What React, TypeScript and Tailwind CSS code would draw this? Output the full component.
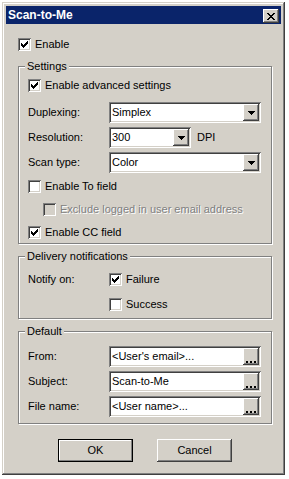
import React from "react";

const sunken =
  "shadow-[inset_1px_1px_0_#808080,inset_-1px_-1px_0_#ffffff,inset_2px_2px_0_#404040,inset_-2px_-2px_0_#d4d0c8]";
const raised =
  "shadow-[inset_-1px_-1px_0_#404040,inset_1px_1px_0_#ffffff,inset_-2px_-2px_0_#808080]";

function CheckMark() {
  return (
    <svg width="7" height="7" viewBox="0 0 7 7" shapeRendering="crispEdges" className="block">
      <path
        fill="#000"
        d="M6 0h1v1h-1zM5 1h2v1h-2zM0 2h1v1h-1zM4 2h3v1h-3zM0 3h2v1h-2zM3 3h3v1h-3zM0 4h5v1h-5zM1 5h3v1h-3zM2 6h1v1h-1z"
      />
    </svg>
  );
}

function CheckRow({
  label,
  checked,
  disabled,
  className = "",
}: {
  label: string;
  checked?: boolean;
  disabled?: boolean;
  className?: string;
}) {
  return (
    <div className={`flex items-center h-[13px] gap-[4px] ${className}`}>
      <span
        className={`w-[13px] h-[13px] shrink-0 flex items-center justify-center ${
          disabled ? "bg-[#d4d0c8]" : "bg-white"
        } ${sunken}`}
      >
        {checked && <CheckMark />}
      </span>
      <span
        className={
          disabled ? "text-[#808080] [text-shadow:1px_1px_0_#ffffff] whitespace-nowrap" : "whitespace-nowrap"
        }
      >
        {label}
      </span>
    </div>
  );
}

function DropButton() {
  return (
    <span className={`w-[16px] shrink-0 bg-[#d4d0c8] flex items-center justify-center ${raised}`}>
      <svg width="7" height="4" viewBox="0 0 7 4" shapeRendering="crispEdges" className="block">
        <path fill="#000" d="M0 0h7v1h-7zM1 1h5v1h-5zM2 2h3v1h-3zM3 3h1v1h-1z" />
      </svg>
    </span>
  );
}

function DotsButton() {
  return (
    <span className={`w-[16px] shrink-0 bg-[#d4d0c8] flex items-end justify-center pb-[2px] ${raised}`}>
      <svg width="10" height="2" viewBox="0 0 10 2" shapeRendering="crispEdges" className="block">
        <path fill="#000" d="M0 0h2v2h-2zM4 0h2v2h-2zM8 0h2v2h-2z" />
      </svg>
    </span>
  );
}

function Combo({ value, className }: { value: string; className: string }) {
  return (
    <div className={`h-[21px] bg-white flex p-[2px] ${sunken} ${className}`}>
      <span className="flex-1 flex items-center pl-[1px] whitespace-nowrap">{value}</span>
      <DropButton />
    </div>
  );
}

function Field({ label, value, className = "" }: { label: string; value: string; className?: string }) {
  return (
    <div className={`flex items-center ${className}`}>
      <span className="w-[81px]">{label}</span>
      <div className={`w-[152px] h-[21px] bg-white flex p-[2px] ${sunken}`}>
        <span className="flex-1 flex items-center pl-[1px] whitespace-nowrap">{value}</span>
        <DotsButton />
      </div>
    </div>
  );
}

function Group({
  title,
  className = "",
  children,
}: {
  title: string;
  className?: string;
  children: React.ReactNode;
}) {
  return (
    <fieldset
      className={`w-[254px] border border-[#808080] shadow-[1px_1px_0_#ffffff,inset_1px_1px_0_#ffffff] ${className}`}
    >
      <legend className="ml-[6px] px-[2px] bg-[#d4d0c8] leading-[13px]">{title}</legend>
      {children}
    </fieldset>
  );
}

export default function App() {
  return (
    <div className="w-[289px] h-[479px] bg-white pt-[2px] pl-[2px] font-['Liberation_Sans',Arial,sans-serif] text-[11px] leading-[13px] text-black">
      <div className="w-[283px] h-[473px] bg-[#d4d0c8] p-[4px] flex flex-col shadow-[inset_-1px_-1px_0_#404040,inset_1px_1px_0_#d4d0c8,inset_-2px_-2px_0_#808080,inset_2px_2px_0_#ffffff]">
        {/* title bar */}
        <div className="h-[18px] shrink-0 bg-[#0a246a] flex justify-between pl-[2px] pr-[2px]">
          <span className="text-white font-bold text-[12px] leading-[18px]">Scan-to-Me</span>
          <span className={`mt-[3px] w-[16px] h-[14px] bg-[#d4d0c8] flex items-center justify-center ${raised}`}>
            <svg width="8" height="7" viewBox="0 0 8 7" shapeRendering="crispEdges" className="block">
              <path
                fill="#000"
                d="M0 0h2v1h-2zM6 0h2v1h-2zM1 1h2v1h-2zM5 1h2v1h-2zM2 2h4v1h-4zM3 3h2v1h-2zM2 4h4v1h-4zM1 5h2v1h-2zM5 5h2v1h-2zM0 6h2v1h-2zM6 6h2v1h-2z"
              />
            </svg>
          </span>
        </div>

        <div className="flex flex-col pl-[12px] pt-[14px]">
          <CheckRow label="Enable" checked />

          <Group title="Settings" className="mt-[9px]">
            <div className="flex flex-col pl-[9px] pt-[6px] pb-[4px]">
              <CheckRow label="Enable advanced settings" checked />
              <div className="flex items-center mt-[10px]">
                <span className="w-[81px]">Duplexing:</span>
                <Combo value="Simplex" className="w-[152px]" />
              </div>
              <div className="flex items-center mt-[4px]">
                <span className="w-[81px]">Resolution:</span>
                <Combo value="300" className="w-[82px]" />
                <span className="ml-[6px]">DPI</span>
              </div>
              <div className="flex items-center mt-[4px]">
                <span className="w-[81px]">Scan type:</span>
                <Combo value="Color" className="w-[152px]" />
              </div>
              <CheckRow label="Enable To field" className="mt-[7px]" />
              <CheckRow label="Exclude logged in user email address" disabled className="mt-[10px] ml-[15px]" />
              <CheckRow label="Enable CC field" checked className="mt-[10px]" />
            </div>
          </Group>

          <Group title="Delivery notifications" className="mt-[6px]">
            <div className="flex flex-col pl-[9px] pt-[10px] pb-[7px]">
              <div className="flex items-center">
                <span className="w-[81px]">Notify on:</span>
                <CheckRow label="Failure" checked />
              </div>
              <CheckRow label="Success" className="mt-[12px] ml-[81px]" />
            </div>
          </Group>

          <Group title="Default" className="mt-[6px]">
            <div className="flex flex-col pl-[9px] pt-[8px] pb-[6px]">
              <Field label="From:" value="<User's email>..." />
              <Field label="Subject:" value="Scan-to-Me" className="mt-[4px]" />
              <Field label="File name:" value="<User name>..." className="mt-[4px]" />
            </div>
          </Group>

          <div className="flex mt-[15px] ml-[40px] gap-[24px]">
            <button className="w-[75px] h-[23px] bg-[#d4d0c8] border border-black shadow-[inset_-1px_-1px_0_#808080,inset_1px_1px_0_#ffffff] flex items-center justify-center">
              OK
            </button>
            <button className={`w-[75px] h-[23px] bg-[#d4d0c8] flex items-center justify-center ${raised}`}>
              Cancel
            </button>
          </div>
        </div>
      </div>
    </div>
  );
}
